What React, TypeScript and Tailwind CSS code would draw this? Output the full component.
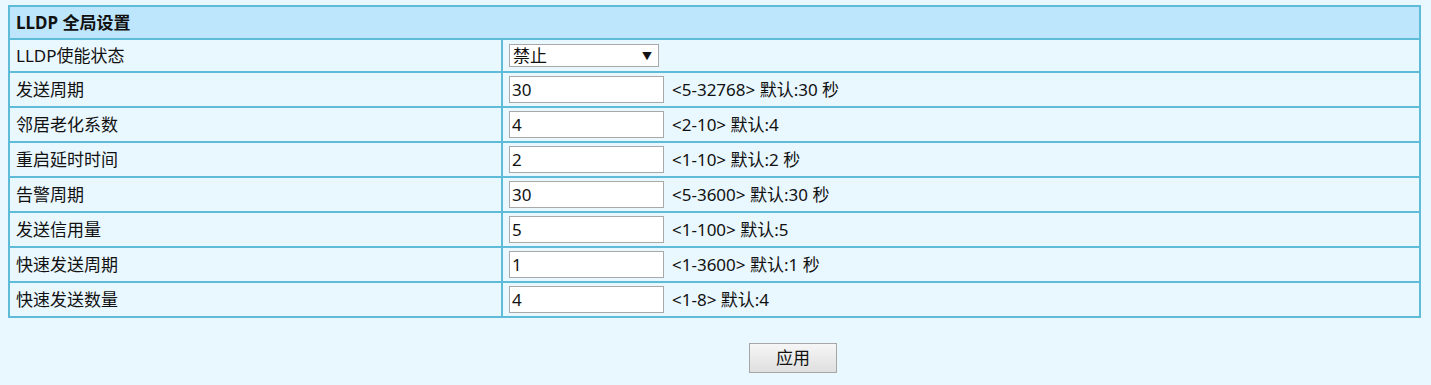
import React from "react";

const rows: { label: string; value: string; hint: string }[] = [
  { label: "发送周期", value: "30", hint: "<5-32768> 默认:30 秒" },
  { label: "邻居老化系数", value: "4", hint: "<2-10> 默认:4" },
  { label: "重启延时时间", value: "2", hint: "<1-10> 默认:2 秒" },
  { label: "告警周期", value: "30", hint: "<5-3600> 默认:30 秒" },
  { label: "发送信用量", value: "5", hint: "<1-100> 默认:5" },
  { label: "快速发送周期", value: "1", hint: "<1-3600> 默认:1 秒" },
  { label: "快速发送数量", value: "4", hint: "<1-8> 默认:4" },
];

const font = { fontFamily: '"Noto Sans", "Noto Sans CJK SC", sans-serif' };

export default function App() {
  return (
    <div
      className="min-h-[385px] w-[1431px] bg-[#e9f7fe] pt-[5px] pl-2 text-[17px] leading-[20px] text-[#111]"
      style={font}
    >
      <div className="w-[1413px] border-2 border-[#5fbcd8]">
        <div className="flex h-[31px] items-center bg-[#bde5fb] pl-[6px] font-bold">
          LLDP 全局设置
        </div>
        <div className="flex h-[33px] border-t-2 border-[#5fbcd8]">
          <div className="flex w-[491px] items-center pl-[6px]">LLDP使能状态</div>
          <div className="flex flex-1 items-center border-l-2 border-[#5fbcd8] pl-[6px]">
            <div className="flex h-[23px] w-[150px] items-center justify-between border border-[#a9a9a9] bg-white pl-[3px] pr-[6px]">
              <span>禁止</span>
              <span className="text-[10px] leading-none">▼</span>
            </div>
          </div>
        </div>
        {rows.map((r) => (
          <div key={r.label} className="flex h-[35px] border-t-2 border-[#5fbcd8]">
            <div className="flex w-[491px] items-center pl-[6px]">{r.label}</div>
            <div className="flex flex-1 items-center border-l-2 border-[#5fbcd8] pl-[6px]">
              <div className="flex h-[27px] w-[155px] items-center border border-[#a9a9a9] bg-white pl-[2px]">
                {r.value}
              </div>
              <span className="ml-2">{r.hint}</span>
            </div>
          </div>
        ))}
      </div>
      <div className="mt-[25px] pl-[741px]">
        <button className="h-[30px] w-[88px] border border-[#a6a6a6] bg-gradient-to-b from-[#f6f6f6] to-[#dfdfdf] text-[17px]">
          应用
        </button>
      </div>
    </div>
  );
}
